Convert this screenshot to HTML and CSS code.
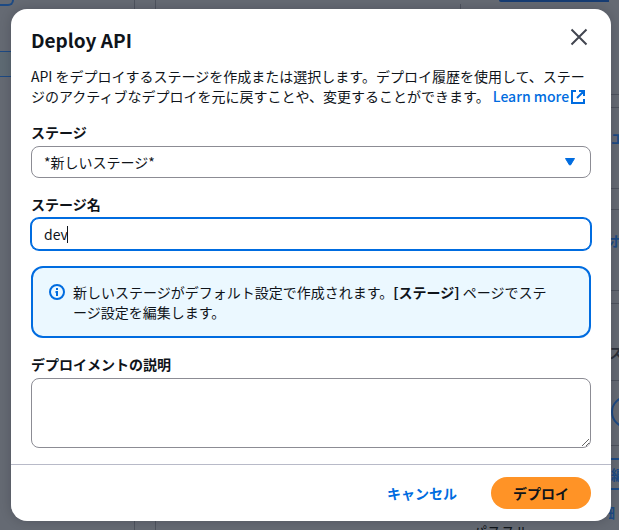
FILE: index.html
```html
<!DOCTYPE html>
<html lang="ja">
<head>
  <meta charset="utf-8">
  <meta name="viewport" content="width=device-width, initial-scale=1">
  <title>Deploy API</title>
  <link rel="stylesheet" href="styles.css">
</head>
<body>
  <div class="page" aria-hidden="true">
    <div class="page-nav">
      <div class="nav-pill"></div>
      <div class="nav-selected"></div>
    </div>
    <div class="page-main">
      <div class="main-content">
        <div class="main-top">
          <div class="main-divider"></div>
          <div class="main-action"></div>
        </div>
        <div class="main-foot">パススルー</div>
      </div>
      <div class="main-side">
        <div class="side-gap side-first"></div>
        <div class="side-card side-link">エ</div>
        <div class="side-gap"></div>
        <div class="side-card side-link side-port">ポ</div>
        <div class="side-gap side-narrow"></div>
        <div class="side-head">ス</div>
        <div class="side-row"><div class="side-circle"></div></div>
        <div class="side-edit">編集</div>
        <div class="side-detail">細</div>
      </div>
    </div>
  </div>

  <div class="overlay">
    <form class="dialog" role="dialog" aria-modal="true" aria-labelledby="dialog-title">
      <header class="dialog-header">
        <h1 class="dialog-title" id="dialog-title">Deploy API</h1>
        <button class="close" type="button" aria-label="閉じる">
          <svg viewBox="0 0 18 18" width="18" height="18"><path d="M1.500 1.500 16.500 16.500M16.500 1.500 1.500 16.500" fill="none" stroke="#424650" stroke-width="2"/></svg>
        </button>
      </header>
      <div class="dialog-body">
        <p class="intro">API をデプロイするステージを作成または選択します。デプロイ履歴を使用して、ステージのアクティブなデプロイを元に戻すことや、変更することができます。 <a class="link" href="#">Learn more<svg class="link-icon" viewBox="1 1 14 14" width="14" height="14"><path d="M6 2H2v12h12v-4M9 2h5v5M14 2 7 9" fill="none" stroke="currentColor" stroke-width="2"/></svg></a></p>

        <div class="field">
          <label class="label" for="stage">ステージ</label>
          <div class="select-wrap">
            <select class="control" id="stage"><option>*新しいステージ*</option></select>
            <svg class="arrow" viewBox="0 0 12 10" width="12" height="10"><path d="M1.500 1.500h9L6.500 8h-1z" fill="#006ce0" stroke="#006ce0" stroke-linejoin="round"/></svg>
          </div>
        </div>

        <div class="field">
          <label class="label" for="stage-name">ステージ名</label>
          <input class="control control-focus" id="stage-name" type="text" value="dev">
        </div>

        <div class="info">
          <svg class="info-icon" viewBox="0 0 16 16" width="16" height="16"><circle cx="8" cy="8" r="7" fill="none" stroke="#006ce0" stroke-width="2"/><path d="M8 4v2M6.500 8H8v4M8 7v5" fill="none" stroke="#006ce0" stroke-width="2"/></svg>
          <p class="info-text">新しいステージがデフォルト設定で作成されます。<b>[ステージ]</b> ページでステージ設定を編集します。</p>
        </div>

        <div class="field">
          <label class="label" for="description">デプロイメントの説明</label>
          <textarea class="control control-area" id="description"></textarea>
        </div>
      </div>
      <footer class="dialog-footer">
        <button class="button button-link" type="button">キャンセル</button>
        <button class="button button-primary" type="submit">デプロイ</button>
      </footer>
    </form>
  </div>
</body>
</html>
```
FILE: styles.css
```css
* {
  box-sizing: border-box;
}

body {
  margin: 0;
  display: grid;
  height: 100vh;
  overflow: hidden;
  font: 14px/20px "Noto Sans CJK JP", "Noto Sans", sans-serif;
  color: #0f141a;
  background: #656a73;
}

.page,
.overlay {
  grid-area: 1 / 1;
  min-width: 0;
  min-height: 0;
}

/* Dimmed console page behind the dialog */
.page {
  display: grid;
  grid-template-columns: 135px minmax(0, 1fr);
  column-gap: 20px;
  overflow: hidden;
  font-weight: 700;
}

.page-nav {
  border-right: 1px solid #4e535e;
}

.nav-pill {
  width: 14px;
  height: 6px;
  border: solid #1d4a84;
  border-width: 0 2px 2px 0;
  border-radius: 0 0 14px 0;
}

.nav-selected {
  height: 26px;
  margin-top: 45px;
  border: solid #1d4a84;
  border-width: 1px 0;
  background: #5e6a73;
}

.page-main {
  display: grid;
  grid-template-columns: minmax(0, 1fr) 10px;
  border-left: 1px solid #4e535e;
}

.main-content {
  display: flex;
  flex-direction: column;
  justify-content: space-between;
}

.main-top {
  display: flex;
  justify-content: flex-end;
  gap: 38px;
}

.main-divider {
  height: 10px;
  margin-top: 4px;
  border-left: 1px solid #4e535e;
}

.main-action {
  width: 110px;
  height: 2px;
  border-radius: 0 0 0 4px;
  background: #163c73;
}

.main-foot {
  height: 9px;
  padding-left: 317px;
  font-weight: 400;
  white-space: nowrap;
}

.main-side {
  overflow: hidden;
  white-space: nowrap;
}

.side-gap {
  height: 20px;
}

.side-first {
  height: 107px;
  background: linear-gradient(#4e535e, #4e535e) 0 94px / 100% 1px no-repeat;
}

.side-narrow {
  height: 12px;
}

.side-card {
  height: 82px;
  padding: 20px 2px;
  border: solid #4e535e;
  border-width: 1px 0;
}

.side-link {
  color: #1d4a84;
}

.side-port {
  padding-left: 0;
}

.side-head {
  height: 78px;
  padding: 38px 0;
  border: solid #4e535e;
  border-width: 1px 0;
  color: #2b303a;
}

.side-row {
  height: 65px;
  padding: 15px 2px;
  border-bottom: 1px solid #4e535e;
}

.side-circle {
  width: 32px;
  height: 32px;
  border: 2px solid #1d4a84;
  border-radius: 50%;
}

.side-edit {
  height: 32px;
  margin-top: 12px;
  padding: 4px 2px;
  border: solid #1d4a84;
  border-width: 2px 0;
  color: #1d4a84;
}

.side-detail {
  margin-top: 12px;
  padding-right: 4px;
  direction: rtl;
  color: #1d4a84;
}

/* Dialog */
.overlay {
  padding: 9px 8px 9px 11px;
}

.dialog {
  border-radius: 16px;
  background: #fff;
  box-shadow: 0 0 12px rgba(0, 7, 22, 0.2);
}

.dialog-header {
  display: flex;
  justify-content: space-between;
  align-items: flex-start;
  padding: 19px 20px 14px;
}

.dialog-title {
  margin: 0;
  font-size: 19px;
  line-height: 24px;
  font-weight: 700;
}

.close {
  display: flex;
  margin-right: 3px;
  padding: 0;
  border: 0;
  background: none;
}

.dialog-body {
  display: grid;
  gap: 16px;
  padding: 0 20px 16px;
}

.intro,
.info-text {
  margin: 0;
  line-break: normal;
}

.link {
  color: #006ce0;
  font-weight: 500;
  text-decoration: none;
  white-space: nowrap;
}

.link-icon {
  margin-left: 2px;
  vertical-align: -2px;
}

.field {
  display: grid;
  gap: 4px;
}

.label {
  font-weight: 700;
}

.control {
  display: block;
  width: 100%;
  height: 32px;
  margin: 0;
  padding: 4px 12px;
  border: 1px solid #8c8c94;
  border-radius: 8px;
  outline: 0;
  appearance: none;
  background: #fff;
  color: #0f141a;
  font: inherit;
}

/* Focused text box with its text cursor after the value */
.control-focus {
  border-color: #006ce0;
  box-shadow: 0 0 0 1px #006ce0;
  background: linear-gradient(#0f141a, #0f141a) 35px 7px / 1px 17px no-repeat #fff;
}

.control-area {
  height: 70px;
  resize: vertical;
}

.select-wrap {
  display: grid;
  align-items: center;
}

.select-wrap > * {
  grid-area: 1 / 1;
}

.arrow {
  justify-self: end;
  margin-right: 15px;
  pointer-events: none;
}

.info {
  display: flex;
  gap: 8px;
  padding: 14px 32px 14px 16px;
  border: 2px solid #006ce0;
  border-radius: 12px;
  background: #ebf8ff;
}

.info-icon {
  flex: none;
  margin-top: 2px;
}

.dialog-footer {
  display: flex;
  justify-content: flex-end;
  gap: 12px;
  padding: 12px 20px;
  border-top: 1px solid #b8bac8;
}

.button {
  height: 32px;
  padding: 0 22px;
  border: 0;
  border-radius: 16px;
  background: none;
  font: inherit;
  font-weight: 700;
}

.button-link {
  color: #006ce0;
}

.button-primary {
  color: #0f141a;
  background: #ff9326;
}
```
